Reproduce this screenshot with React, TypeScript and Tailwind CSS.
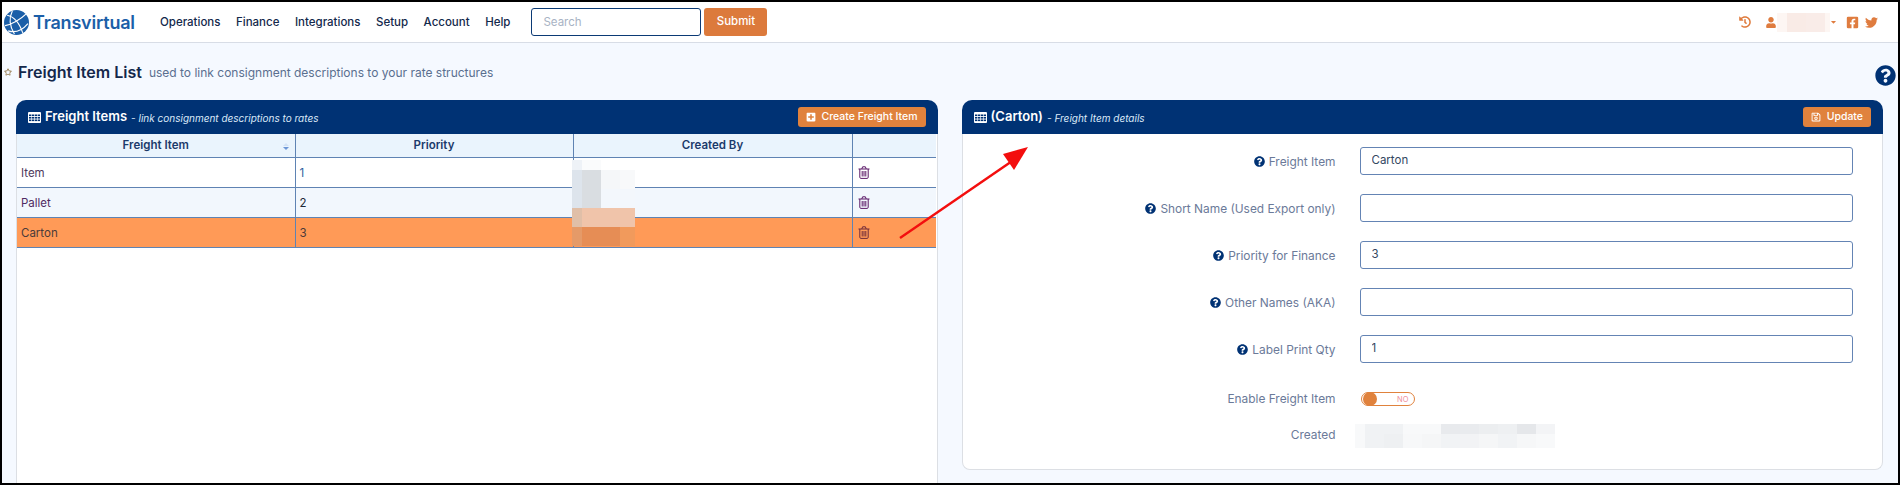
import {
  FaRegStar,
  FaPlusSquare,
  FaRegSave,
  FaQuestionCircle,
  FaHistory,
  FaUser,
  FaCaretDown,
  FaFacebookSquare,
  FaTwitter,
} from "react-icons/fa";

const navItems = ["Operations", "Finance", "Integrations", "Setup", "Account", "Help"];

const rows = [
  { name: "Item", priority: "1", rowClass: "bg-white", nameClass: "text-[#4f3a5c]", priorityClass: "text-[#2f5f9e]", trashClass: "text-[#5a1766]" },
  { name: "Pallet", priority: "2", rowClass: "bg-[#f2f7fd]", nameClass: "text-[#4f2a62]", priorityClass: "text-[#1f2937]", trashClass: "text-[#5a1766]" },
  { name: "Carton", priority: "3", rowClass: "bg-[#ff9a57]", nameClass: "text-[#4a3a3a]", priorityClass: "text-[#4a3a3a]", trashClass: "text-[#6e2a3a]" },
];

const fields = [
  { label: "Freight Item", value: "Carton" },
  { label: "Short Name (Used Export only)", value: "" },
  { label: "Priority for Finance", value: "3" },
  { label: "Other Names (AKA)", value: "" },
  { label: "Label Print Qty", value: "1" },
];

// pixelated patches that hide names in the screenshot
const createdByBlur = [
  "bg-[#eef2f7]", "bg-[#fafbfc]", "bg-transparent", "bg-transparent",
  "bg-[#dde4ec]", "bg-[#d9dde1]", "bg-[#f5f7f9]", "bg-[#f8f9fa]",
  "bg-[#dde4ec]", "bg-[#d9dde1]", "bg-[#f3f7fc]", "bg-[#f3f7fc]",
  "bg-[#e0bfa8]", "bg-[#f0c4aa]", "bg-[#f0c4aa]", "bg-[#f0c4aa]",
  "bg-[#e59a68]", "bg-[#e68d55]", "bg-[#e68d55]", "bg-[#f19a5c]",
];

const createdTop = ["bg-[#f8f9fa]", "bg-[#f0f2f4]", "bg-[#f0f2f4]", "bg-[#f8f9fa]", "bg-[#f8f9fa]", "bg-[#e8eaed]", "bg-[#e9ebee]", "bg-[#eceef0]", "bg-[#eef0f2]", "bg-[#e5e7ea]", "bg-[#f3f4f6]"];
const createdBottom = ["bg-[#f8f9fa]", "bg-[#f0f2f4]", "bg-[#eef0f2]", "bg-[#f7f8f9]", "bg-[#f5f6f7]", "bg-[#f1f3f5]", "bg-[#f2f3f5]", "bg-[#f5f6f7]", "bg-[#f1f3f5]", "bg-[#f6f7f8]", "bg-[#f8f9fa]"];

function Logo() {
  return (
    <svg viewBox="0 0 24 24" className="w-[25px] h-[25px]">
      <circle cx="12" cy="12" r="12" fill="#1b5fa8" />
      <g fill="none" stroke="#ffffff" strokeWidth="1.1">
        <path d="M3 5c5 1 11 5 15 17" />
        <path d="M1 15c6-1 15-6 20-11" />
        <path d="M8 1c-3 6-3 14 2 22" />
        <path d="M4 20c6 2 13 0 19-7" />
      </g>
    </svg>
  );
}

function TableIcon() {
  return (
    <svg viewBox="0 0 13 11" className="w-[13px] h-[11px] mr-[4px]">
      <rect x="0" y="0" width="13" height="11" rx="1" fill="#ffffff" />
      <g fill="#003274">
        <rect x="1" y="2.5" width="2.4" height="1.6" />
        <rect x="4" y="2.5" width="2.2" height="1.6" />
        <rect x="6.8" y="2.5" width="2.2" height="1.6" />
        <rect x="9.6" y="2.5" width="2.4" height="1.6" />
        <rect x="1" y="5" width="2.4" height="1.6" />
        <rect x="4" y="5" width="2.2" height="1.6" />
        <rect x="6.8" y="5" width="2.2" height="1.6" />
        <rect x="9.6" y="5" width="2.4" height="1.6" />
        <rect x="1" y="7.5" width="2.4" height="1.6" />
        <rect x="4" y="7.5" width="2.2" height="1.6" />
        <rect x="6.8" y="7.5" width="2.2" height="1.6" />
        <rect x="9.6" y="7.5" width="2.4" height="1.6" />
      </g>
    </svg>
  );
}

function TrashIcon({ className }: { className: string }) {
  return (
    <svg viewBox="0 0 12 13" className={`w-[12px] h-[13px] ${className}`} fill="none" stroke="currentColor" strokeWidth="1">
      <path d="M0.5 3h11" />
      <path d="M3.8 3l0.8-2.2h2.8l0.8 2.2" />
      <path d="M1.8 3v8.2c0 0.7 0.4 1.2 1 1.2h6.4c0.6 0 1-0.5 1-1.2V3" />
      <path d="M4.2 5v5.5M6 5v5.5M7.8 5v5.5" />
    </svg>
  );
}

function SortIcon() {
  return (
    <svg viewBox="0 0 6 7" className="absolute right-[6px] top-[9px] w-[6px] h-[7px]">
      <polygon points="3,0 6,3 0,3" fill="#d3e2f5" />
      <polygon points="0,4 6,4 3,7" fill="#6d96d6" />
    </svg>
  );
}

function PanelHeader({ title, note, children }: { title: string; note: string; children: React.ReactNode }) {
  return (
    <div className="h-[34px] bg-[#003274] rounded-t-[10px] flex items-center justify-between pl-[12px] pr-[12px] text-white">
      <div className="flex items-center">
        <TableIcon />
        <span className="text-[13px] font-semibold">{title}</span>
        <span className="text-[10px] italic ml-[4px] mt-[2px] text-[#dbe9f8]">- {note}</span>
      </div>
      {children}
    </div>
  );
}

function PanelButton({ icon, label }: { icon: React.ReactNode; label: string }) {
  return (
    <button className="h-[20px] px-[8px] rounded-[3px] bg-[#e0823d] text-white text-[10.5px] font-medium flex items-center gap-[6px]">
      {icon}
      {label}
    </button>
  );
}

export default function App() {
  return (
    <div className="relative w-[1900px] h-[485px] overflow-hidden border-2 border-black bg-[#f5f9ff] flex flex-col font-['Inter',sans-serif]">
      {/* top bar */}
      <div className="h-[41px] shrink-0 bg-white border-b border-[#d8dde6] flex items-center pl-[2px] pr-[20px]">
        <Logo />
        <span className="ml-[4px] w-[127px] text-[18px] font-semibold text-[#1b5fa8] tracking-[-0.2px]">Transvirtual</span>
        <nav className="flex gap-[15.5px] mt-[1px] text-[11.5px] font-medium text-[#13284b]">
          {navItems.map((item) => (
            <span key={item}>{item}</span>
          ))}
        </nav>
        <input
          placeholder="Search"
          className="ml-[21px] w-[170px] h-[28px] px-[11px] rounded-[3px] border border-[#0b3a75] text-[11.5px] placeholder:text-[#a8b3c4]"
        />
        <button className="ml-[3px] w-[63px] h-[28px] rounded-[3px] bg-[#dc7a3c] text-white text-[11.5px] font-medium">Submit</button>

        <div className="ml-auto flex items-center text-[#df7c3f]">
          <FaHistory className="w-[12px] h-[12px]" />
          <FaUser className="ml-[15px] w-[10px] h-[11px]" />
          <div className="flex h-[19px] ml-[1px]">
            <div className="w-[10px] bg-[#fdf6f3]" />
            <div className="w-[19px] bg-[#f9ebe6]" />
            <div className="w-[19px] bg-[#f9ece8]" />
            <div className="w-[5px] bg-[#fdf6f3]" />
          </div>
          <FaCaretDown className="w-[7px] h-[8px]" />
          <FaFacebookSquare className="ml-[9px] w-[13px] h-[13px]" />
          <FaTwitter className="ml-[6px] w-[13px] h-[13px]" />
        </div>
      </div>

      {/* page title */}
      <div className="h-[57px] shrink-0 flex items-center pl-[2px] pr-[2px]">
        <FaRegStar className="w-[8px] h-[8px] text-[#8a6d3b] mr-[6px] mt-[1px]" />
        <span className="text-[16px] font-semibold text-[#13284b] leading-none">Freight Item List</span>
        <span className="ml-[7px] text-[12px] text-[#5a6f8f] leading-none mt-[3px]">used to link consignment descriptions to your rate structures</span>
        <FaQuestionCircle className="ml-auto w-[21px] h-[21px] text-[#003274] mt-[7px]" />
      </div>

      {/* panels */}
      <div className="flex-1 min-h-0 grid grid-cols-2 gap-6 pl-[14px] pr-[15px]">
        <section className="flex flex-col min-h-0">
          <PanelHeader title="Freight Items" note="link consignment descriptions to rates">
            <PanelButton icon={<FaPlusSquare className="w-[10px] h-[10px]" />} label="Create Freight Item" />
          </PanelHeader>
          <div className="relative flex-1 bg-white border-x border-[#dcdfe4] pr-[1px]">
            <table className="w-full table-fixed border-collapse text-[11.5px]">
              <colgroup>
                <col className="w-[278px]" />
                <col className="w-[278px]" />
                <col className="w-[279px]" />
                <col />
              </colgroup>
              <thead>
                <tr className="h-[23px] bg-[#eaf4fd] text-[#1b3a6b]">
                  <th className="relative pt-[1px] font-semibold border-r border-b border-[#5f83b3]">
                    Freight Item
                    <SortIcon />
                  </th>
                  <th className="pt-[1px] font-semibold border-r border-b border-[#5f83b3]">Priority</th>
                  <th className="pt-[1px] font-semibold border-r border-b border-[#5f83b3]">Created By</th>
                  <th className="border-b border-[#5f83b3]" />
                </tr>
              </thead>
              <tbody>
                {rows.map((row) => (
                  <tr key={row.name} className={`h-[30px] ${row.rowClass}`}>
                    <td className={`pl-[4px] pt-[3px] border-r border-b border-[#5f83b3] ${row.nameClass}`}>{row.name}</td>
                    <td className={`pl-[4px] pt-[3px] border-r border-b border-[#5f83b3] ${row.priorityClass}`}>{row.priority}</td>
                    <td className="border-r border-b border-[#5f83b3]" />
                    <td className="pl-[5px] border-b border-[#5f83b3]">
                      <TrashIcon className={row.trashClass} />
                    </td>
                  </tr>
                ))}
              </tbody>
            </table>
            <div className="absolute left-[555px] top-[26px] grid grid-cols-[10px_19px_19px_15px] grid-rows-[10px_19px_19px_19px_19px]">
              {createdByBlur.map((c, i) => (
                <div key={i} className={c} />
              ))}
            </div>
          </div>
        </section>

        <section className="flex flex-col min-h-0 pb-[13px]">
          <PanelHeader title="(Carton)" note="Freight Item details">
            <PanelButton icon={<FaRegSave className="w-[10px] h-[10px]" />} label="Update" />
          </PanelHeader>
          <div className="flex-1 bg-white border-x border-b border-[#dcdfe4] rounded-b-[8px] pt-[13px] pr-[29px]">
            <div className="flex flex-col gap-[19px]">
              {fields.map((f) => (
                <div key={f.label} className="flex items-center h-[28px]">
                  <label className="w-[373px] shrink-0 mt-[2px] flex items-center justify-end text-[11.9px] text-[#6b7a99]">
                    <FaQuestionCircle className="w-[11px] h-[11px] text-[#003274] mr-[4px]" />
                    {f.label}
                  </label>
                  <input
                    readOnly
                    value={f.value}
                    className="ml-[24px] flex-1 h-[28px] px-[11px] pb-[2px] rounded-[3px] border border-[#6484b4] text-[11.5px] text-[#33475f]"
                  />
                </div>
              ))}
            </div>
            <div className="flex items-center h-[14px] mt-[29px]">
              <span className="w-[373px] shrink-0 text-right text-[11.9px] text-[#6b7a99]">Enable Freight Item</span>
              <div className="relative ml-[25px] w-[54px] h-[14px] rounded-full border border-[#e0823d] bg-white">
                <div className="absolute left-[1px] top-[-1px] w-[14px] h-[14px] rounded-full bg-[#e0823d]" />
                <span className="absolute right-[5px] top-[1px] text-[7.5px] leading-[12px] text-[#ef8f9c]">NO</span>
              </div>
            </div>
            <div className="flex items-center h-[24px] mt-[18px]">
              <span className="w-[373px] shrink-0 -mt-[3px] text-right text-[11.9px] text-[#6b7a99]">Created</span>
              <div className="ml-[19px] flex flex-col">
                <div className="flex h-[10px]">
                  {createdTop.map((c, i) => (
                    <div key={i} className={`${i === 0 ? "w-[10px]" : "w-[19px]"} ${c}`} />
                  ))}
                </div>
                <div className="flex h-[14px]">
                  {createdBottom.map((c, i) => (
                    <div key={i} className={`${i === 0 ? "w-[10px]" : "w-[19px]"} ${c}`} />
                  ))}
                </div>
              </div>
            </div>
          </div>
        </section>
      </div>

      {/* red annotation arrow */}
      <svg className="absolute left-[888px] top-[135px] w-[150px] h-[110px] pointer-events-none" viewBox="0 0 150 110">
        <line x1="10" y1="101" x2="128" y2="20" stroke="#f30e0e" strokeWidth="2.4" />
        <polygon points="138,10 113,17 124,33" fill="#f30e0e" />
      </svg>
    </div>
  );
}
